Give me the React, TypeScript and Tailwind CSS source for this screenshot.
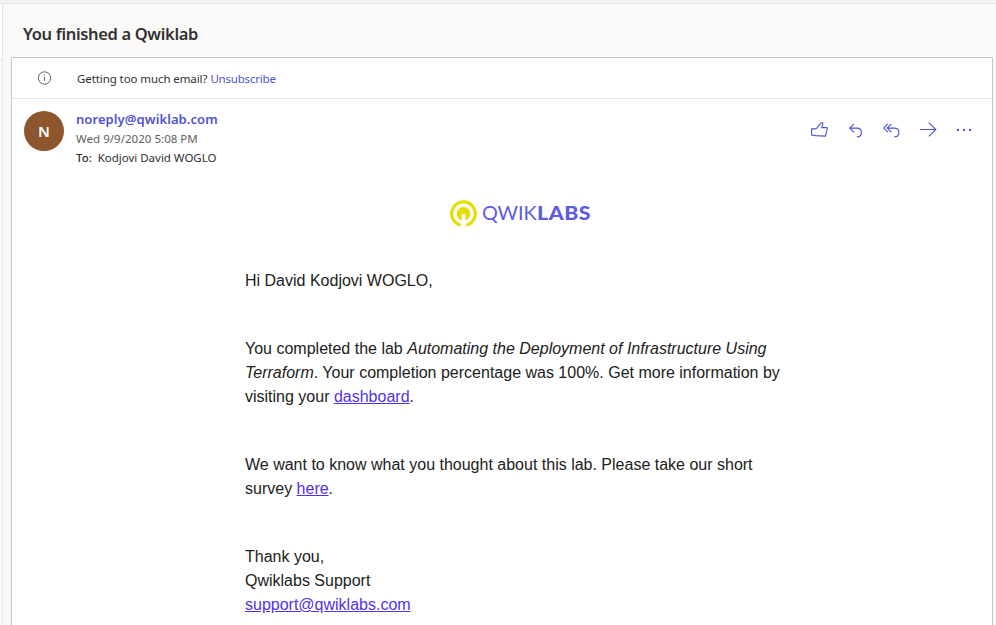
import React from "react";

function ReplyPath() {
  return <path d="M5 .8 .7 5.1l4.3 4.2M1 5.1h6.8c2.8 0 4.6 1.8 4.6 4.3s-1.8 4.4-4.6 4.4" />;
}

function Actions() {
  return (
    <div className="mt-[23px] mr-px flex h-4 w-[161px] shrink-0 justify-between text-[#4f52d3]">
      <svg width="18" height="16" viewBox="0 0 18 16" fill="none" stroke="currentColor" strokeWidth="1.1">
        <path d="M.6 6.9h3.7c1.3-.2 1.7-1 2.5-2L9.9 1.2C10.9.2 12.1.7 11.9 2l-1.1 3.6h4.7c.7 0 1 .4.8 1l-1.8 7.5-9.9-.5-4-.5z" />
      </svg>
      <svg width="14" height="16" viewBox="0 0 14 16" fill="none" stroke="currentColor" strokeWidth="1.1" className="mt-px">
        <ReplyPath />
      </svg>
      <svg width="17" height="16" viewBox="0 0 17 16" fill="none" stroke="currentColor" strokeWidth="1.1" className="mt-px">
        <path d="M4.7.8.7 5.1l4.2 4.1" />
        <g transform="translate(3.5 0)"><ReplyPath /></g>
      </svg>
      <svg width="17" height="16" viewBox="0 0 17 16" fill="none" stroke="currentColor" strokeWidth="1.1">
        <path d="M0 7.5h16M8.8.6l7 6.9-7 6.9" />
      </svg>
      <svg width="15" height="16" viewBox="0 0 15 16" fill="currentColor" className="mt-px">
        <path d="M0 6h2v2H0zM6 6h2v2H6zM12 6h2v2h-2z" />
      </svg>
    </div>
  );
}

function Logo() {
  return (
    <div className="flex h-7 items-center text-[#5c5be5]">
      <svg width="28" height="28" viewBox="0.5 0 28 28" fill="none">
        <path d="M11.2 25.2A11.8 11.8 0 1 1 16.8 25.2" stroke="#e8dd00" strokeWidth="3.2" />
        <path d="M12.2 20.4V14h3.6v6.4a6.8 6.8 0 1 0-3.6 0z" fill="#e8dd00" />
      </svg>
      <div className="mb-0.5 ml-1 flex font-[Lato,sans-serif] text-[19px] leading-7 whitespace-nowrap">
        <span className="w-[55px] origin-left scale-x-[1.04] font-normal">QWIK</span>
        <span className="origin-left scale-x-[1.12] font-black tracking-[0.5px]">LABS</span>
      </div>
    </div>
  );
}

export default function App() {
  return (
    <div className="flex h-[625px] w-[996px] flex-col overflow-hidden bg-[#faf9f8] font-['Noto_Sans',sans-serif] text-[#323130]">
      <div className="h-1 shrink-0 border-b border-[#e8e6e4] bg-[#f3f2f1]" />
      <div className="flex min-h-0 flex-1">
        <div className="w-[3px] shrink-0 border-r border-[#e8e6e4]">
          <div className="h-[56px] border-b border-[#e8e6e4] bg-white" />
        </div>
        <main className="flex w-[990px] flex-col pl-2">
          <h1 className="h-[53px] shrink-0 pt-[18px] pl-3 text-[16.5px] leading-6 font-semibold tracking-[-0.35px] whitespace-nowrap">You finished a Qwiklab</h1>
          <section className="flex-1 rounded-t-[2px] border border-b-0 border-[#c8c6c4] bg-white">
            <div className="flex h-[41px] items-center border-b border-[#e8e8e8] text-[11.5px]">
              <svg width="14" height="14" viewBox="0 0 14 14" fill="none" stroke="#69615e" className="mb-px ml-[26px]">
                <circle cx="6.5" cy="7" r="6.2" />
                <path d="M6.5 6v4M6.5 3.7v1.1" />
              </svg>
              <span className="ml-[25px] pt-0.5 tracking-[-0.09px] whitespace-nowrap">Getting too much email?</span>
              <a className="ml-[3px] pt-0.5 tracking-[-0.2px] text-[#4f52d3]">Unsubscribe</a>
            </div>
            <div className="flex h-[83px] justify-between pr-[19px] pl-3">
              <div className="flex">
                <div className="mt-3 flex size-10 items-center justify-center rounded-full bg-[#8e562e] text-[15px] font-semibold text-white">N</div>
                <div className="ml-3 pt-[10px] whitespace-nowrap">
                  <div className="h-5 text-[13px] leading-5 font-semibold tracking-[0.08px] text-[#4f52d3]">noreply@qwiklab.com</div>
                  <div className="h-[19px] text-[11.5px] leading-5 tracking-[0.03px] text-[#605e5c]">Wed 9/9/2020 5:08 PM</div>
                  <div className="text-[11.5px] leading-5 tracking-[-0.02px]"><span className="mr-[6px] font-medium">To:</span>Kodjovi David WOGLO</div>
                </div>
              </div>
              <Actions />
            </div>
            <div className="ml-[233px] w-[550px] font-['Liberation_Sans',Arial,sans-serif] text-[16px] leading-6 text-[#212121]">
              <div className="mb-[41px] ml-[205px] pt-[18px]"><Logo /></div>
              <p className="mb-11">Hi David Kodjovi WOGLO,</p>
              <p className="mb-11">You completed the lab <em>Automating the Deployment of Infrastructure Using<br />Terraform</em>. Your completion percentage was 100%. Get more information by<br />visiting your <a className="text-[#5331eb] underline">dashboard</a>.</p>
              <p className="mb-11">We want to know what you thought about this lab. Please take our short<br />survey <a className="text-[#5331eb] underline">here</a>.</p>
              <p>Thank you,<br />Qwiklabs Support<br /><a className="text-[#5331eb] underline">support@qwiklabs.com</a></p>
            </div>
          </section>
        </main>
      </div>
    </div>
  );
}
